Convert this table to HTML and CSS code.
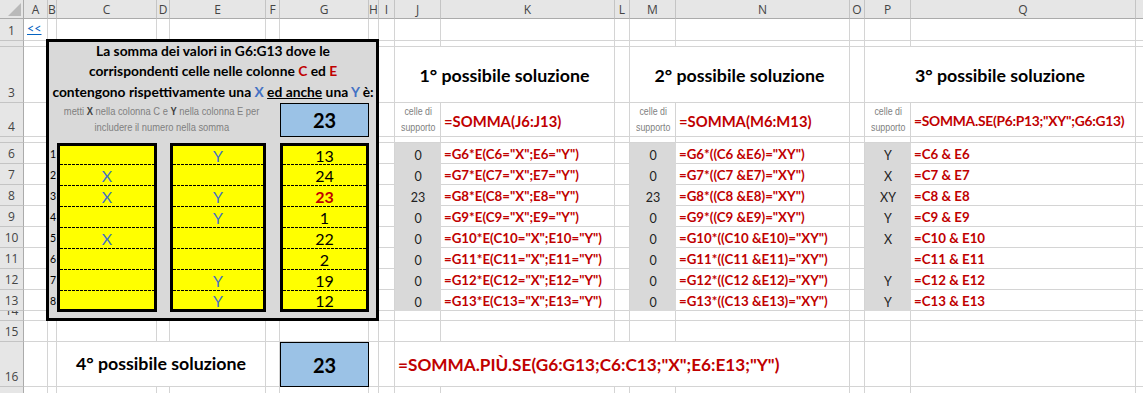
FILE: index.html
```html
<!DOCTYPE html>
<html lang="it">
<head>
<meta charset="utf-8">
<title>SOMMA.PIÙ.SE</title>
<link rel="stylesheet" href="styles.css">
</head>
<body>
<div class="sheet">
  <div class="corner"><svg class="tri" width="13" height="13" viewBox="0 0 13 13"><polygon points="0,13 13,13 13,0" fill="#b9b9b9"/></svg></div>
  <div class="ch cA">A</div><div class="ch cB">B</div><div class="ch cC">C</div><div class="ch cD">D</div><div class="ch cE">E</div><div class="ch cF">F</div><div class="ch cG">G</div><div class="ch cH">H</div><div class="ch cI">I</div><div class="ch cJ">J</div><div class="ch cK">K</div><div class="ch cL">L</div><div class="ch cM">M</div><div class="ch cN">N</div><div class="ch cO">O</div><div class="ch cP">P</div><div class="ch cQ">Q</div><div class="ch cR"></div>

  <div class="rh r1">1</div><div class="rh r2">2</div><div class="rh r3">3</div><div class="rh r4">4</div><div class="rh r5">5</div><div class="rh r6">6</div><div class="rh r7">7</div><div class="rh r8">8</div><div class="rh r9">9</div><div class="rh r10">10</div><div class="rh r11">11</div><div class="rh r12">12</div><div class="rh r13">13</div><div class="rh r14">14</div><div class="rh r15">15</div><div class="rh r16">16</div><div class="rh r17"></div>

  <div class="vl cA"></div><div class="vl cB"></div><div class="vl cC"></div><div class="vl cD"></div><div class="vl cE"></div><div class="vl cF"></div><div class="vl cG"></div><div class="vl cH"></div><div class="vl cI"></div><div class="vl cJ"></div><div class="vl cK"></div><div class="vl cL"></div><div class="vl cM"></div><div class="vl cN"></div><div class="vl cO"></div><div class="vl cP"></div><div class="vl cQ"></div><div class="vl cR"></div>

  <div class="hl r1"></div><div class="hl r2"></div><div class="hl r3"></div><div class="hl r4"></div><div class="hl r5"></div><div class="hl r6"></div><div class="hl r7"></div><div class="hl r8"></div><div class="hl r9"></div><div class="hl r10"></div><div class="hl r11"></div><div class="hl r12"></div><div class="hl r13"></div><div class="hl r14"></div><div class="hl r15"></div><div class="hl r16"></div><div class="hl r17"></div>

  <div class="link cA r1"><span>&lt;&lt;</span></div>

  <!-- left panel -->
  <div class="panel"></div>
  <div class="title">
    <div>La somma dei valori in G6:G13 dove le</div>
    <div>corrispondenti celle nelle colonne <span class="red">C</span> ed <span class="red">E</span></div>
    <div>contengono rispettivamente una <span class="blue">X</span> <u>ed anche</u> una <span class="blue">Y</span> è:</div>
  </div>
  <div class="note">
    <div>metti <b>X</b> nella colonna C e <b>Y</b> nella colonna E per</div>
    <div>includere il numero nella somma</div>
  </div>
  <div class="bluebox cG r4">23</div>

  <div class="bnum r6">1</div><div class="bnum r7">2</div><div class="bnum r8">3</div><div class="bnum r9">4</div><div class="bnum r10">5</div><div class="bnum r11">6</div><div class="bnum r12">7</div><div class="bnum r13">8</div>

  <div class="ybox cC">
    <div class="yrow"></div><div class="yrow xy">X</div><div class="yrow xy">X</div><div class="yrow"></div><div class="yrow xy">X</div><div class="yrow"></div><div class="yrow"></div><div class="yrow"></div>
  </div>
  <div class="ybox cE">
    <div class="yrow xy">Y</div><div class="yrow"></div><div class="yrow xy">Y</div><div class="yrow xy">Y</div><div class="yrow"></div><div class="yrow"></div><div class="yrow xy">Y</div><div class="yrow xy">Y</div>
  </div>
  <div class="ybox cG">
    <div class="yrow">13</div><div class="yrow">24</div><div class="yrow hot">23</div><div class="yrow">1</div><div class="yrow">22</div><div class="yrow">2</div><div class="yrow">19</div><div class="yrow">12</div>
  </div>

  <!-- solution 1 -->
  <div class="sec m-JK r3">1° possibile soluzione</div>
  <div class="suplab cJ r4"><div>celle di</div><div>supporto</div></div>
  <div class="f4 cK r4">=SOMMA(J6:J13)</div>
  <div class="sup cJ r6">0</div><div class="fx cK r6">=G6*E(C6="X";E6="Y")</div>
  <div class="sup cJ r7">0</div><div class="fx cK r7">=G7*E(C7="X";E7="Y")</div>
  <div class="sup cJ r8">23</div><div class="fx cK r8">=G8*E(C8="X";E8="Y")</div>
  <div class="sup cJ r9">0</div><div class="fx cK r9">=G9*E(C9="X";E9="Y")</div>
  <div class="sup cJ r10">0</div><div class="fx cK r10">=G10*E(C10="X";E10="Y")</div>
  <div class="sup cJ r11">0</div><div class="fx cK r11">=G11*E(C11="X";E11="Y")</div>
  <div class="sup cJ r12">0</div><div class="fx cK r12">=G12*E(C12="X";E12="Y")</div>
  <div class="sup cJ r13">0</div><div class="fx cK r13">=G13*E(C13="X";E13="Y")</div>

  <!-- solution 2 -->
  <div class="sec m-MN r3">2° possibile soluzione</div>
  <div class="suplab cM r4"><div>celle di</div><div>supporto</div></div>
  <div class="f4 cN r4">=SOMMA(M6:M13)</div>
  <div class="sup cM r6">0</div><div class="fx cN r6">=G6*((C6 &amp;E6)="XY")</div>
  <div class="sup cM r7">0</div><div class="fx cN r7">=G7*((C7 &amp;E7)="XY")</div>
  <div class="sup cM r8">23</div><div class="fx cN r8">=G8*((C8 &amp;E8)="XY")</div>
  <div class="sup cM r9">0</div><div class="fx cN r9">=G9*((C9 &amp;E9)="XY")</div>
  <div class="sup cM r10">0</div><div class="fx cN r10">=G10*((C10 &amp;E10)="XY")</div>
  <div class="sup cM r11">0</div><div class="fx cN r11">=G11*((C11 &amp;E11)="XY")</div>
  <div class="sup cM r12">0</div><div class="fx cN r12">=G12*((C12 &amp;E12)="XY")</div>
  <div class="sup cM r13">0</div><div class="fx cN r13">=G13*((C13 &amp;E13)="XY")</div>

  <!-- solution 3 -->
  <div class="sec m-PQ r3">3° possibile soluzione</div>
  <div class="suplab cP r4"><div>celle di</div><div>supporto</div></div>
  <div class="f4 tight cQ r4">=SOMMA.SE(P6:P13;"XY";G6:G13)</div>
  <div class="sup cP r6">Y</div><div class="fx cQ r6">=C6 &amp; E6</div>
  <div class="sup cP r7">X</div><div class="fx cQ r7">=C7 &amp; E7</div>
  <div class="sup cP r8">XY</div><div class="fx cQ r8">=C8 &amp; E8</div>
  <div class="sup cP r9">Y</div><div class="fx cQ r9">=C9 &amp; E9</div>
  <div class="sup cP r10">X</div><div class="fx cQ r10">=C10 &amp; E10</div>
  <div class="sup cP r11"></div><div class="fx cQ r11">=C11 &amp; E11</div>
  <div class="sup cP r12">Y</div><div class="fx cQ r12">=C12 &amp; E12</div>
  <div class="sup cP r13">Y</div><div class="fx cQ r13">=C13 &amp; E13</div>

  <!-- solution 4 -->
  <div class="sec low m-CE r16">4° possibile soluzione</div>
  <div class="bluebox cG r16">23</div>
  <div class="bigfx m-JN r16">=SOMMA.PIÙ.SE(G6:G13;C6:C13;"X";E6:E13;"Y")</div>
</div>
</body>
</html>
```

FILE: styles.css
```css
html, body {
  margin: 0;
  padding: 0;
  background: #fff;
  overflow: hidden;
}
body {
  width: 1143px;
  height: 393px;
  font-family: Lato, "Noto Sans", sans-serif;
  color: #000;
}
.sheet {
  display: grid;
  grid-template-columns: 24px 24px 9px 100px 13px 96px 14px 89px 10px 16px 46px 174px 15px 46px 174px 15px 46px 225px 60px;
  grid-template-rows: 19px 22px 6px 56px 34px 6px repeat(8, 21px) 10px 21px 45px 21px;
  width: max-content;
}
.sheet > div { box-sizing: border-box; min-width: 0; min-height: 0; }

/* placement */
.cA { grid-column: 2; } .cB { grid-column: 3; } .cC { grid-column: 4; } .cD { grid-column: 5; }
.cE { grid-column: 6; } .cF { grid-column: 7; } .cG { grid-column: 8; } .cH { grid-column: 9; }
.cI { grid-column: 10; } .cJ { grid-column: 11; } .cK { grid-column: 12; } .cL { grid-column: 13; }
.cM { grid-column: 14; } .cN { grid-column: 15; } .cO { grid-column: 16; } .cP { grid-column: 17; }
.cQ { grid-column: 18; } .cR { grid-column: 19; }
.m-JK { grid-column: 11 / 13; } .m-MN { grid-column: 14 / 16; } .m-PQ { grid-column: 17 / 19; }
.m-CE { grid-column: 4 / 7; } .m-JN { grid-column: 11 / 16; }
.r1 { grid-row: 2; } .r2 { grid-row: 3; } .r3 { grid-row: 4; } .r4 { grid-row: 5; } .r5 { grid-row: 6; }
.r6 { grid-row: 7; } .r7 { grid-row: 8; } .r8 { grid-row: 9; } .r9 { grid-row: 10; } .r10 { grid-row: 11; }
.r11 { grid-row: 12; } .r12 { grid-row: 13; } .r13 { grid-row: 14; } .r14 { grid-row: 15; } .r15 { grid-row: 16; }
.r16 { grid-row: 17; } .r17 { grid-row: 18; }

/* headers */
.corner {
  grid-column: 1; grid-row: 1;
  background: #e6e6e6;
  border-right: 1px solid #ababab;
  border-bottom: 1px solid #ababab;
  display: flex; align-items: flex-end; justify-content: flex-end;
  padding: 0 2px 2px 0;
}
.tri { display: block; }
.ch {
  grid-row: 1;
  background: #e6e6e6;
  border-right: 1px solid #c4c4c4;
  border-bottom: 1px solid #ababab;
  display: flex; align-items: center; justify-content: center;
  font-family: "Open Sans", "Noto Sans", sans-serif;
  font-size: 12px; color: #444;
  overflow: hidden;
}
.rh {
  grid-column: 1;
  background: #e6e6e6;
  border-right: 1px solid #ababab;
  border-bottom: 1px solid #c4c4c4;
  display: flex; align-items: flex-end; justify-content: center;
  font-family: "Open Sans", "Noto Sans", sans-serif;
  font-size: 12px; line-height: 14px; color: #444;
  padding-bottom: 2px;
  overflow: hidden;
}

/* gridlines */
.vl { grid-row: 2 / -1; border-right: 1px solid #d4d4d4; }
.hl { grid-column: 2 / -1; border-bottom: 1px solid #d4d4d4; }

.link {
  display: flex; align-items: flex-end;
  padding: 0 0 5px 3px;
  color: #0563c1; font-size: 12.5px; line-height: 14px;
}
.link span { text-decoration: underline; }

/* panel */
.panel {
  grid-column: 3 / 10; grid-row: 3 / 16;
  background: #d9d9d9;
  border: 3px solid #000;
  margin: -2px 0 0 -2px;
}
.title {
  grid-column: 4 / 9; grid-row: 4;
  display: flex; flex-direction: column; justify-content: flex-end; align-items: center;
  font-weight: 700; font-size: 13.8px; line-height: 20.5px;
  padding-bottom: 1px;
  white-space: nowrap;
}
.red { color: #c00000; }
.blue { color: #4472c4; }
.note {
  grid-column: 4 / 7; grid-row: 5;
  display: flex; flex-direction: column; justify-content: center; align-items: center;
  font-family: "Liberation Sans", Arial, sans-serif;
  font-size: 10.4px; line-height: 16px; color: #808080;
  white-space: nowrap;
}
.note div { transform: scaleX(0.9); }
.note b { color: #404040; }
.bluebox {
  background: #9bc2e6;
  border: 1px solid #000;
  display: flex; align-items: center; justify-content: center;
  font-weight: 700; font-size: 20px;
}
.bnum {
  grid-column: 3;
  display: flex; align-items: center;
  padding: 1px 0 0 2px;
  font-size: 10.5px;
}
.ybox {
  grid-row: 7 / 15;
  margin-bottom: -1px;
  background: #ffff00;
  border: 3px solid #000;
  display: flex; flex-direction: column;
}
.yrow {
  height: 21px;
  flex: none;
  display: flex; align-items: center; justify-content: center;
  font-size: 16px;
  background-image: repeating-linear-gradient(to right, #000 0 3px, transparent 3px 4px);
  background-size: 100% 1px;
  background-position: left bottom;
  background-repeat: no-repeat;
}
.yrow:first-child { height: 19px; }
.yrow:last-child { flex: 1; background-image: none; }
.xy { color: #4472c4; }
.hot { color: #c00000; font-weight: 700; }

/* solution areas */
.sec {
  background: #fff;
  border-right: 1px solid #d4d4d4;
  border-bottom: 1px solid #d4d4d4;
  display: flex; align-items: center; justify-content: center;
  font-weight: 700; font-size: 17.8px;
  white-space: nowrap;
}
.sec.low { padding-bottom: 2px; }
.suplab {
  display: flex; flex-direction: column; justify-content: center; align-items: center;
  font-family: "Liberation Sans", Arial, sans-serif;
  font-size: 10.4px; line-height: 16px; color: #7f7f7f;
  white-space: nowrap;
}
.suplab div { transform: scaleX(0.85); }
.f4 {
  display: flex; align-items: center;
  padding: 1px 0 0 3px;
  color: #c00000; font-weight: 700; font-size: 14.8px;
  white-space: nowrap;
}
.f4.tight { font-size: 13.8px; letter-spacing: -0.25px; }
.sup {
  background: #d9d9d9;
  display: flex; align-items: flex-end; justify-content: center;
  padding-bottom: 1px;
  font-size: 12.5px; line-height: 15px; color: #222;
}
.fx {
  display: flex; align-items: center;
  padding-left: 3px;
  color: #c00000; font-weight: 700; font-size: 13.3px;
  white-space: nowrap;
}
.bigfx {
  background: #fff;
  border-right: 1px solid #d4d4d4;
  border-bottom: 1px solid #d4d4d4;
  display: flex; align-items: center;
  padding-left: 3px;
  color: #c00000; font-weight: 700; font-size: 17.2px;
  white-space: nowrap;
}
```
